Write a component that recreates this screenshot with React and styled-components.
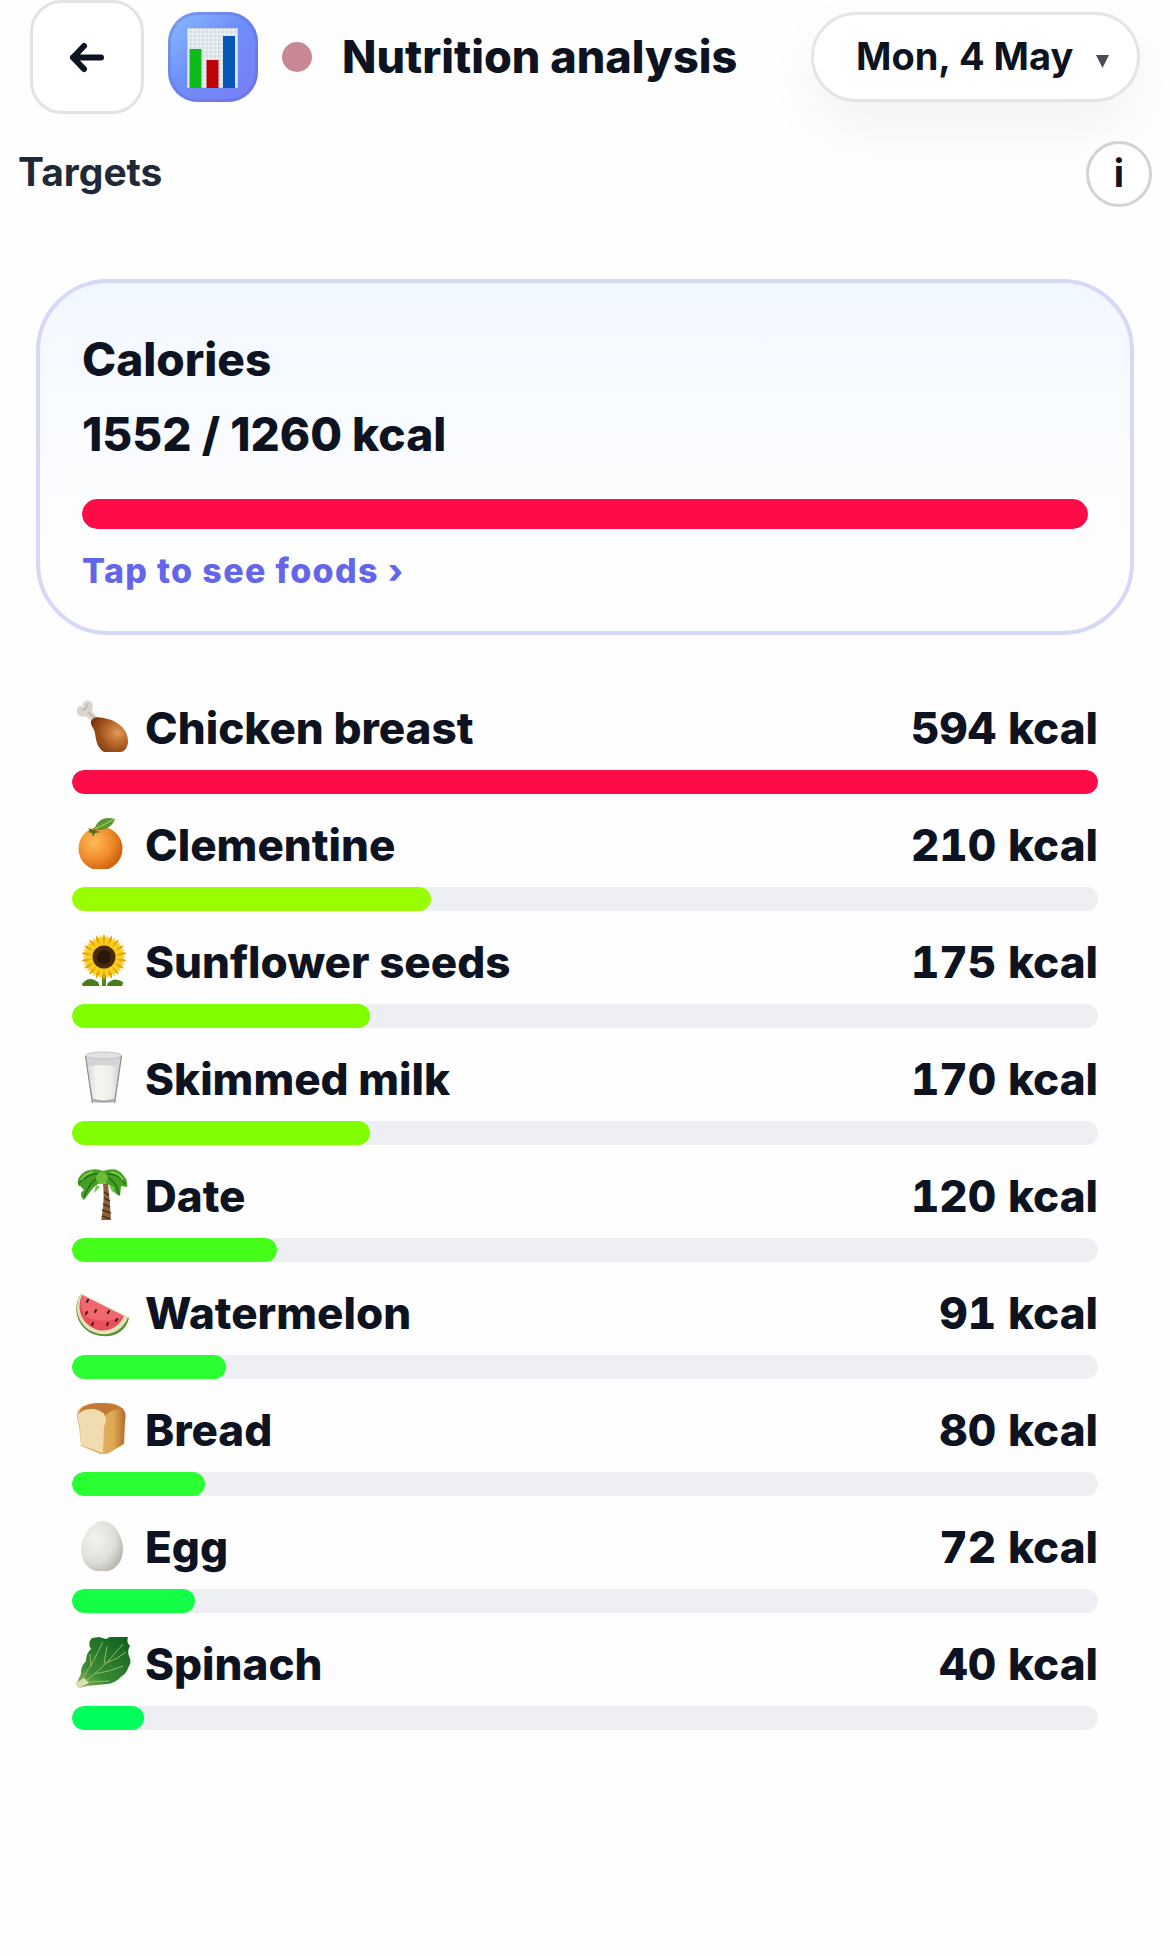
import React from "react";
import styled, { createGlobalStyle } from "styled-components";

const GlobalStyle = createGlobalStyle`
  *, *::before, *::after { box-sizing: border-box; }
  body {
    margin: 0;
    background: #fefefe;
    color: #0d1320;
    font-family: Inter, "Liberation Sans", sans-serif;
  }
  button, select { font: inherit; color: inherit; }
`;

const Page = styled.main`
  min-height: 100vh;
  padding-bottom: 120px;
`;

const Header = styled.header`
  display: flex;
  align-items: center;
  gap: 24px;
  padding: 0 30px;
`;

const BackButton = styled.button`
  display: grid;
  place-items: center;
  flex: none;
  width: 114px;
  height: 114px;
  padding: 0;
  border: 3px solid #e3e3e4;
  border-radius: 32px;
  background: #fff;
`;

const AppIcon = styled.span`
  display: grid;
  place-items: center;
  flex: none;
  width: 90px;
  height: 90px;
  border-radius: 30px;
  overflow: hidden;
  background: linear-gradient(135deg, #8abdfc 0%, #6f8ffa 45%, #7a7cf4 100%);
  box-shadow: inset 0 0 0 3px rgba(85, 95, 205, 0.3);
`;

const StatusDot = styled.span`
  flex: none;
  width: 30px;
  height: 30px;
  border-radius: 50%;
  background: #c88893;
`;

const Title = styled.h1`
  flex: 1;
  margin: 0 0 0 6px;
  font-size: 45px;
  line-height: 54px;
  font-weight: 800;
  white-space: nowrap;
`;

const DatePicker = styled.label`
  position: relative;
  flex: none;
  height: 90px;
  border: 3px solid #e5e5e7;
  border-radius: 45px;
  background: #fff;
  box-shadow: 0 24px 60px rgba(15, 19, 32, 0.05);
`;

const DateSelect = styled.select`
  appearance: none;
  height: 100%;
  padding: 0 62px 3px 42px;
  border: 0;
  border-radius: 45px;
  background: transparent;
  font-size: 38px;
  font-weight: 700;
`;

const Caret = styled.svg`
  position: absolute;
  right: 28px;
  top: 40px;
  pointer-events: none;
`;

const SectionBar = styled.div`
  display: flex;
  justify-content: space-between;
  align-items: flex-start;
  padding: 27px 18px 0;
`;

const SectionTitle = styled.h2`
  margin: 0;
  font-size: 39px;
  line-height: 62px;
  font-weight: 700;
  color: #1f2937;
`;

const InfoButton = styled.button`
  width: 66px;
  height: 66px;
  padding: 0 0 3px;
  border: 3px solid #d3d3d5;
  border-radius: 50%;
  background: #fff;
  font-size: 38px;
  line-height: 54px;
  font-weight: 700;
`;

const SummaryCard = styled.button`
  display: flex;
  flex-direction: column;
  width: calc(100% - 72px);
  margin: 72px 36px 0;
  padding: 40px 42px 30px;
  border: 4px solid #d7d8f8;
  border-radius: 72px;
  background: linear-gradient(180deg, #f2f8ff 0%, #fafcff 50%, #fefefe 80%);
  text-align: left;
`;

const SummaryName = styled.span`
  font-size: 46px;
  line-height: 72px;
  font-weight: 800;
`;

const SummaryValue = styled.span`
  margin-bottom: 26px;
  font-size: 46px;
  line-height: 78px;
  font-weight: 800;
`;

const SummaryHint = styled.span`
  margin-top: 12px;
  font-size: 34px;
  line-height: 60px;
  font-weight: 800;
  letter-spacing: 0.04em;
  color: #6466ea;
`;

const Track = styled.span`
  display: block;
  width: 100%;
  height: ${(p) => (p.$large ? 30 : 24)}px;
  border-radius: 15px;
  overflow: hidden;
  background: #eeeff3;
`;

const Fill = styled.span`
  display: block;
  height: 100%;
  border-radius: 15px;
  background: ${(p) => p.$color};
`;

const FoodList = styled.ul`
  display: grid;
  gap: 21px;
  margin: 0;
  padding: 63px 72px 0;
  list-style: none;
`;

const FoodItem = styled.li`
  display: grid;
  gap: 12px;
`;

const FoodLine = styled.div`
  display: flex;
  align-items: center;
  gap: 13px;
  font-size: 44px;
  line-height: 60px;
  font-weight: 800;
`;

const FoodIcon = styled.svg`
  flex: none;
  width: 60px;
  height: 60px;
`;

const FoodName = styled.span`
  flex: 1;
`;

const FoodEnergy = styled.span`
  font-variant-numeric: tabular-nums;
`;

function Progress({ value, color, label, large }) {
  return (
    <Track $large={large} role="progressbar" aria-label={label} aria-valuenow={value} aria-valuemin={0} aria-valuemax={100}>
      <Fill $color={color} style={{ width: `${value}%` }} />
    </Track>
  );
}

function ChartIcon() {
  const lines = [];
  for (let i = 1; i < 13; i++) lines.push(<path key={`v${i}`} d={`M${19 + i * 4} 16V76`} />);
  for (let i = 1; i < 15; i++) lines.push(<path key={`h${i}`} d={`M19 ${16 + i * 4}H70`} />);
  return (
    <svg width="90" height="90" viewBox="0 0 90 90" aria-hidden="true">
      <rect x="19" y="16" width="51" height="60" fill="#edf2f5" />
      <g stroke="#ccd9e1" strokeWidth="1">{lines}</g>
      <rect x="19.5" y="16.5" width="50" height="59" fill="none" stroke="#c5cedb" />
      <rect x="21.5" y="37" width="12" height="39" fill="#0dbb1b" />
      <rect x="38.5" y="48" width="12" height="28" fill="#bf0307" />
      <rect x="55" y="24" width="12" height="52" fill="#0756b8" />
    </svg>
  );
}

const petals = (count, r1, r2, offset) =>
  Array.from({ length: count }, (_, i) => {
    const a = ((i + offset) * 2 * Math.PI) / count;
    const w = Math.PI / count;
    const p = (ang, r) => `${32 + Math.cos(ang) * r} ${25 + Math.sin(ang) * r}`;
    return `M${p(a - w, r1)}Q${p(a - w * 0.9, r2 * 0.8)} ${p(a, r2)}Q${p(a + w * 0.9, r2 * 0.8)} ${p(a + w, r1)}Z`;
  }).join("");

const drawings = {
  chicken: (
    <>
      <defs>
        <radialGradient id="meat" cx="0.72" cy="0.45" r="0.75">
          <stop offset="0" stopColor="#e09a55" />
          <stop offset="0.4" stopColor="#ba6a2c" />
          <stop offset="1" stopColor="#783308" />
        </radialGradient>
      </defs>
      <path d="M20 23 13 18C8 20 4 16 5 11C6 8 9 7 11 9C10 4 13 2 17 3C22 4 21 10 20 13L26 20Z" fill="#d9d5ca" />
      <path d="M10 12Q15 12 15 6M16 14l7 7" stroke="#b5ada0" strokeWidth="1.2" fill="none" />
      <path d="M19 23C22 17 30 20 36 21C47 24 56 32 56 43C56 49 53 54 48 54H32C25 50 24 42 23 35C22 30 18 27 19 23Z" fill="url(#meat)" />
      <path d="M23 25C28 32 29 44 36 50" stroke="#934915" strokeWidth="2" fill="none" opacity="0.4" />
    </>
  ),
  orange: (
    <>
      <defs>
        <radialGradient id="peel" cx="0.35" cy="0.35" r="0.7">
          <stop offset="0" stopColor="#ffbd5b" />
          <stop offset="0.6" stopColor="#f08a2a" />
          <stop offset="1" stopColor="#cf5d0e" />
        </radialGradient>
      </defs>
      <circle cx="28.5" cy="33.5" r="22" fill="url(#peel)" />
      <path d="M16 13l5 2 2-2 1 3 5 1-6 1-2 4-1-4-4-1 2-1z" fill="#4f6c1d" />
      <path d="M22 15C25 4 34 1 43 4C40 13 31 16 22 15Z" fill="#5c942d" />
      <path d="M23 14Q32 10 42 4" stroke="#a6c86a" strokeWidth="1.2" fill="none" />
    </>
  ),
  sunflower: (
    <>
      <path d="M30 40h4v15h-4z" fill="#4b8a1f" />
      <path d="M10 52Q17 43 26 50L28 55H11ZM35 52Q42 44 51 50L50 55H36Z" fill="#497c1c" />
      <path d={petals(18, 12, 23, 0.5)} fill="#e9a80b" />
      <path d={petals(18, 10, 22, 0)} fill="#fbd01c" />
      <circle cx="32" cy="25" r="11.5" fill="#4b2b0b" />
      <circle cx="32" cy="25" r="7" fill="#2b1a0b" />
    </>
  ),
  milk: (
    <>
      <defs>
        <linearGradient id="milk">
          <stop offset="0" stopColor="#d8d8d3" />
          <stop offset="0.3" stopColor="#f6f5ef" />
          <stop offset="0.75" stopColor="#eeeee8" />
          <stop offset="1" stopColor="#cececa" />
        </linearGradient>
      </defs>
      <path d="M13 6H50L43 55H20Z" fill="#d4d5d6" />
      <path d="M15 18Q31 14 48 18L42 49Q31 53 21 49Z" fill="url(#milk)" />
      <ellipse cx="31.5" cy="6.5" rx="18" ry="3.5" fill="#e0e1e2" stroke="#c4c5c7" />
      <path d="M13.5 7L20.5 54M49.5 7L42.5 54M21 51Q31 54 43 51" stroke="#8b8d8f" strokeWidth="1.2" fill="none" />
    </>
  ),
  palm: (
    <>
      <path d="M31 18H36Q38 35 39 55H29Q33 36 31 18Z" fill="#8b6238" />
      <path d="M32 26l5 3M32 32l6 3M31 38l7 3M30 44l9 3M30 50l8 3" stroke="#4d321c" strokeWidth="1.5" />
      <path d="M30 17C22 18 20 24 12 34C8 31 8 26 12 24C9 22 10 20 7 20C3 14 10 5 18 4Q24 2 31 5Q45 0 51 9Q56 14 55 21L49 20L48 30Q42 28 39 20L35 18Z" fill="#459f23" />
      <path d="M30 8Q18 6 7 17M30 10Q19 13 12 31M33 8Q48 7 53 18M35 11Q44 15 47 28" stroke="#237019" strokeWidth="1.5" fill="none" />
      <path d="M21 6Q13 7 9 14M39 6Q47 7 51 14" stroke="#7cc947" strokeWidth="2" fill="none" />
      <circle cx="30" cy="12" r="6" fill="#6cbb37" />
      <path d="M24 19l-2 8 6-6zM37 20l4 7 2-6z" fill="#77c34a" />
    </>
  ),
  watermelon: (
    <>
      <path d="M9 11C1 22 3 40 17 49C33 58 53 53 57 35Z" fill="#5b913b" />
      <path d="M9 11C2 22 4 38 17 47C33 56 50 50 56 34Z" fill="#e4e4b8" />
      <path d="M10 12C5 23 7 36 19 44C32 52 46 46 52 33Z" fill="#e94e5b" />
      <path d="M10 12C8 20 9 28 15 34C28 40 40 38 52 33Z" fill="#f57b7e" opacity="0.55" />
      <path d="M15 19l1-2M14 31l1-2M23 29l1-2M36 30l1-2M20 42l1-2M35 42l1-2M44 38l1-2" stroke="#42151a" strokeWidth="2" strokeLinecap="round" />
    </>
  ),
  bread: (
    <>
      <defs>
        <linearGradient id="crust">
          <stop offset="0" stopColor="#e5bb77" />
          <stop offset="0.75" stopColor="#dda954" />
          <stop offset="1" stopColor="#b56a2a" />
        </linearGradient>
      </defs>
      <path d="M5 15C5 6 17 3 29 3Q43 2 50 8Q55 12 53 21L52 44L37 53Q31 56 26 53L9 46L7 26Q5 22 5 15Z" fill="url(#crust)" />
      <path d="M7 13C9 5 19 3 29 3Q43 3 51 9Q38 9 33 16Q23 7 7 13Z" fill="#c47a34" />
      <path d="M6 15Q10 8 22 9Q33 11 34 19Q34 23 32 27L31 53L9 45L8 26Q5 21 6 15Z" fill="#f0dcae" />
    </>
  ),
  egg: (
    <>
      <defs>
        <radialGradient id="shell" cx="0.35" cy="0.35" r="0.75">
          <stop offset="0" stopColor="#f4f3ef" />
          <stop offset="0.6" stopColor="#e1dfd9" />
          <stop offset="1" stopColor="#b4b0a8" />
        </radialGradient>
      </defs>
      <path d="M31 4C42 4 51 20 51 32C51 46 42 55 30 55C18 55 9 46 9 32C9 20 20 4 31 4Z" fill="url(#shell)" />
    </>
  ),
  spinach: (
    <>
      <defs>
        <linearGradient id="leaf" x1="0" y1="1" x2="0.8" y2="0">
          <stop offset="0" stopColor="#9bb861" />
          <stop offset="0.35" stopColor="#3a8a34" />
          <stop offset="1" stopColor="#136322" />
        </linearGradient>
      </defs>
      <path d="M4 50L9 40Q8 33 14 27Q14 19 19 15Q15 9 20 4L27 3L34 5L38 3L56 3Q54 8 58 12Q55 17 57 22Q60 29 57 32Q54 40 50 42Q42 50 35 50L15 52L7 54Z" fill="url(#leaf)" />
      <path d="M6 51Q25 42 51 10M9 47Q22 28 31 8M22 40Q37 38 51 32M34 29Q46 25 54 18M19 33L18 20M15 48L37 47M32 30L35 12" stroke="#8fbb68" strokeWidth="1" fill="none" />
      <path d="M4 49L12 44 17 49 7 54Z" fill="#dcdfb5" />
    </>
  ),
};

const foods = [
  { name: "Chicken breast", icon: "chicken", kcal: 594, value: 100, color: "#ff0b47" },
  { name: "Clementine", icon: "orange", kcal: 210, value: 35, color: "#99ff00" },
  { name: "Sunflower seeds", icon: "sunflower", kcal: 175, value: 29, color: "#80ff00" },
  { name: "Skimmed milk", icon: "milk", kcal: 170, value: 29, color: "#80ff00" },
  { name: "Date", icon: "palm", kcal: 120, value: 20, color: "#45ff1a" },
  { name: "Watermelon", icon: "watermelon", kcal: 91, value: 15, color: "#2aff33" },
  { name: "Bread", icon: "bread", kcal: 80, value: 13, color: "#2aff33" },
  { name: "Egg", icon: "egg", kcal: 72, value: 12, color: "#13ff47" },
  { name: "Spinach", icon: "spinach", kcal: 40, value: 7, color: "#00ff5b" },
];

export default function App() {
  return (
    <>
      <GlobalStyle />
      <Page>
        <Header>
          <BackButton type="button" aria-label="Back">
            <svg width="36" height="36" viewBox="0 0 36 36" fill="none" stroke="#0d1320" strokeWidth="6" strokeLinecap="round" strokeLinejoin="round" aria-hidden="true">
              <path d="M32 18.5H4M15 7L4 18.5L15 30" />
            </svg>
          </BackButton>
          <AppIcon>
            <ChartIcon />
          </AppIcon>
          <StatusDot />
          <Title>Nutrition analysis</Title>
          <DatePicker>
            <DateSelect aria-label="Date" defaultValue="Mon, 4 May">
              <option>Mon, 4 May</option>
            </DateSelect>
            <Caret width="13" height="13" viewBox="0 0 13 13" aria-hidden="true">
              <path d="M0 0H13L6.5 13Z" fill="#4b4d55" />
            </Caret>
          </DatePicker>
        </Header>

        <SectionBar>
          <SectionTitle>Targets</SectionTitle>
          <InfoButton type="button" aria-label="About targets">i</InfoButton>
        </SectionBar>

        <SummaryCard type="button">
          <SummaryName>Calories</SummaryName>
          <SummaryValue>1552 / 1260 kcal</SummaryValue>
          <Progress large value={100} color="#ff0b47" label="Calories" />
          <SummaryHint>Tap to see foods ›</SummaryHint>
        </SummaryCard>

        <FoodList>
          {foods.map((food) => (
            <FoodItem key={food.name}>
              <FoodLine>
                <FoodIcon viewBox="0 0 60 60" aria-hidden="true">
                  <clipPath id={`clip-${food.icon}`}>
                    <rect width="60" height="54" />
                  </clipPath>
                  <g clipPath={`url(#clip-${food.icon})`}>{drawings[food.icon]}</g>
                </FoodIcon>
                <FoodName>{food.name}</FoodName>
                <FoodEnergy>{food.kcal} kcal</FoodEnergy>
              </FoodLine>
              <Progress value={food.value} color={food.color} label={food.name} />
            </FoodItem>
          ))}
        </FoodList>
      </Page>
    </>
  );
}
